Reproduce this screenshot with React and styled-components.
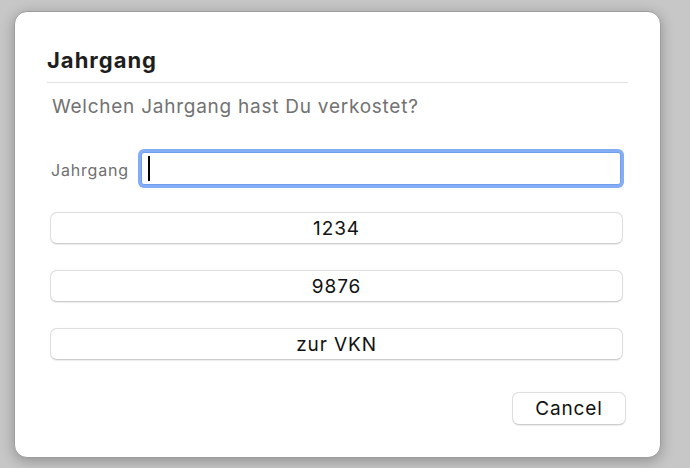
import React from "react";
import styled, { createGlobalStyle } from "styled-components";

const Global = createGlobalStyle`
  html, body { margin: 0; padding: 0; }
  body {
    background: #c7c7c7;
    font-family: Inter, "Liberation Sans", sans-serif;
    width: 690px;
    height: 468px;
    overflow: hidden;
  }
  * { box-sizing: border-box; }
`;

const Page = styled.div`
  padding: 11px 0 0 14px;
`;

const Dialog = styled.div`
  width: 647px;
  height: 447px;
  background: #ffffff;
  border: 1px solid #9d9d9d;
  border-radius: 13px;
  box-shadow: 0 3px 14px rgba(0, 0, 0, 0.28);
  padding: 36px 32px 0 32px;
  display: flex;
  flex-direction: column;
`;

const Header = styled.div`
  border-bottom: 1px solid #e2e2e2;
  padding-bottom: 9px;
`;

const Title = styled.h1`
  margin: 0;
  font-size: 22px;
  line-height: 25px;
  font-weight: 700;
  letter-spacing: 1px;
  color: #1e1e1e;
`;

const Body = styled.div`
  display: flex;
  flex-direction: column;
  padding: 0 0 0 3px;
`;

const Subtitle = styled.p`
  margin: 13px 0 0 2px;
  font-size: 19px;
  line-height: 22px;
  letter-spacing: 0.75px;
  color: #727272;
`;

const FieldRow = styled.div`
  display: flex;
  align-items: center;
  margin-top: 34px;
  padding-right: 7px;
`;

const Label = styled.label`
  flex: 0 0 91px;
  padding-left: 1px;
  padding-top: 3px;
  font-size: 16px;
  letter-spacing: 0.8px;
  color: #6f6f6f;
`;

const InputWrap = styled.div`
  position: relative;
  flex: 1;
  display: flex;
`;

const Input = styled.input`
  flex: 1;
  height: 33px;
  border: 1px solid #6f9eef;
  border-radius: 3px;
  box-shadow: 0 0 0 3px #84adf6;
  outline: none;
  font-family: inherit;
  font-size: 16px;
  padding: 0 5px;
  caret-color: transparent;
`;

const Caret = styled.span`
  position: absolute;
  left: 7px;
  top: 4px;
  width: 2px;
  height: 25px;
  background: #000000;
`;

const ChoiceList = styled.div`
  display: flex;
  flex-direction: column;
  gap: 26px;
  margin-top: 27px;
  padding-right: 5px;
`;

const PushButton = styled.button`
  height: ${(p) => (p.$compact ? "33px" : "32px")};
  width: ${(p) => (p.$compact ? "114px" : "100%")};
  background: #ffffff;
  border: 1px solid #dedede;
  border-bottom-color: #cdcdcd;
  border-radius: 7px;
  box-shadow: 0 0.5px 1px rgba(0, 0, 0, 0.08);
  font-family: inherit;
  font-size: 19px;
  letter-spacing: 0.9px;
  color: #111111;
  padding: 0;
`;

const Footer = styled.div`
  display: flex;
  justify-content: flex-end;
  margin-top: 32px;
  padding-right: 2px;
`;

export default function App() {
  return (
    <>
      <Global />
      <Page>
        <Dialog>
          <Header>
            <Title>Jahrgang</Title>
          </Header>
          <Body>
            <Subtitle>Welchen Jahrgang hast Du verkostet?</Subtitle>
            <FieldRow>
              <Label htmlFor="jg">Jahrgang</Label>
              <InputWrap>
                <Input id="jg" defaultValue="" />
                <Caret />
              </InputWrap>
            </FieldRow>
            <ChoiceList>
              <PushButton>1234</PushButton>
              <PushButton>9876</PushButton>
              <PushButton>zur VKN</PushButton>
            </ChoiceList>
            <Footer>
              <PushButton $compact>Cancel</PushButton>
            </Footer>
          </Body>
        </Dialog>
      </Page>
    </>
  );
}
